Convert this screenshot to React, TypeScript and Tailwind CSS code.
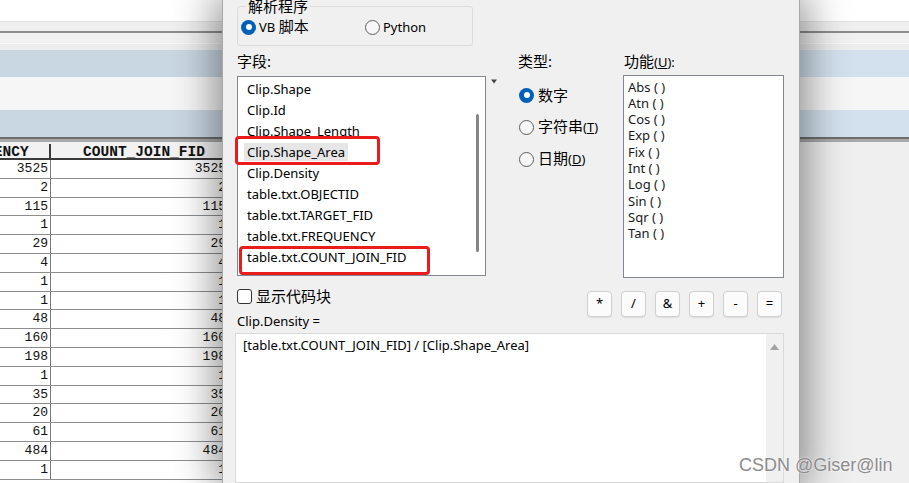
const fields = [
  "Clip.Shape",
  "Clip.Id",
  "Clip.Shape_Length",
  "Clip.Shape_Area",
  "Clip.Density",
  "table.txt.OBJECTID",
  "table.txt.TARGET_FID",
  "table.txt.FREQUENCY",
  "table.txt.COUNT_JOIN_FID",
];

const funcs = ["Abs", "Atn", "Cos", "Exp", "Fix", "Int", "Log", "Sin", "Sqr", "Tan"];

const counts = [3525, 2, 115, 1, 29, 4, 1, 1, 48, 160, 198, 1, 35, 20, 61, 484, 1];

const operators = ["*", "/", "&", "+", "-", "="];

const Z = ({ children }: { children: React.ReactNode }) => (
  <span className="text-[15px]">{children}</span>
);

const Radio = ({ checked }: { checked?: boolean }) =>
  checked ? (
    <span className="flex h-[15px] w-[15px] shrink-0 items-center justify-center rounded-full bg-[#005fb8]">
      <span className="h-[6px] w-[6px] rounded-full bg-white" />
    </span>
  ) : (
    <span className="h-[15px] w-[15px] shrink-0 rounded-full border border-[#5f5f5f] bg-[#f7f7f7]" />
  );

const Strip = ({ blue }: { blue: string }) => (
  <div className="flex shrink-0 flex-col">
    <div className="h-[21px] bg-white" />
    <div className="h-[1px] bg-[#e4e4e4]" />
    <div className="h-[9px] bg-[#efefef]" />
    <div className="h-[2px] bg-[#8c8c8c]" />
    <div className="h-[10px] bg-[#f1f1f1]" />
    <div className="h-[1px] bg-[#fafafa]" />
    <div className="h-[6px] bg-[#ededed]" />
    <div className={`h-[27px] ${blue}`} />
    <div className="h-[33px] bg-[#f6f6f6]" />
    <div className={`h-[27px] ${blue}`} />
    <div className="h-[2px] bg-[#6e6e6e]" />
    <div className="h-[3px] bg-[#a9a9a9]" />
  </div>
);

const LeftPanel = () => (
  <div className="flex w-[222px] shrink-0 flex-col overflow-hidden bg-white">
    <Strip blue="bg-[#c9d7e3]" />
    <div className="ml-[-70px] w-[300px] font-['Liberation_Mono',monospace]">
      <div className="flex h-[18px] border-b-2 border-[#3a3a3a] bg-[#f2f2f2] pt-[2px] text-[14.5px] font-bold leading-[16px] text-[#111]">
        <div className="w-[121px] shrink-0 border-r-2 border-[#3a3a3a] text-center">FREQUENCY</div>
        <div className="w-[178px] shrink-0 pl-[8px] text-center">COUNT_JOIN_FID</div>
      </div>
      {counts.map((n, i) => (
        <div key={i} className="flex h-[18.8px] border-b border-[#8e8e8e] bg-white text-[13px] leading-[18px] text-[#111]">
          <div className="w-[121px] shrink-0 border-r border-[#7a7a7a] pr-[2px] text-right">{n}</div>
          <div className="w-[178px] shrink-0 pr-[3px] text-right">{n}</div>
        </div>
      ))}
    </div>
  </div>
);

const Dialog = () => (
  <div className="relative z-10 flex w-[578px] shrink-0 flex-col border-x border-[#a8a8a8] bg-[#f0f0f0] pl-[14px] text-[13px] text-black shadow-[0_0_40px_6px_rgba(0,0,0,0.45)]">
    {/* parser group */}
    <div className="relative mt-[6px] h-[42px] w-[236px] rounded-[3px] border border-[#dcdcdc]">
      <span className="absolute left-[8px] top-[-9px] bg-[#f0f0f0] px-[2px] text-[15px] leading-[16px]">解析程序</span>
      <div className="flex items-center pl-[3px] pt-[12px] leading-[15px]">
        <div className="flex w-[124px] items-center gap-[3px]">
          <Radio checked />
          <span>
            VB <Z>脚本</Z>
          </span>
        </div>
        <div className="flex items-center gap-[3px]">
          <Radio />
          <span>Python</span>
        </div>
      </div>
    </div>

    {/* fields / type / functions */}
    <div className="mt-[7px] flex h-[225px]">
      <div className="flex w-[249px] shrink-0 flex-col">
        <div className="text-[15px] leading-[16px]">字段:</div>
        <div className="relative mt-[7px] flex h-[200px] border border-[#828790] bg-white">
          <div className="flex-1 pl-[6px] pt-[2px]">
            {fields.map((f) => (
              <div key={f} className="flex h-[21px] items-center">
                <span className={f === "Clip.Shape_Area" ? "bg-[#e6e6e6] px-[3px] leading-[18px]" : "px-[3px] leading-[18px]"}>{f}</span>
              </div>
            ))}
          </div>
          <div className="flex w-[16px] justify-center pt-[37px]">
            <div className="h-[138px] w-[3px] rounded-full bg-[#858585]" />
          </div>
          <div className="absolute left-[-3px] top-[59px] h-[29px] w-[145px] rounded-[4px] border-[3px] border-[#ea1b1b]" />
          <div className="absolute left-[1px] top-[169px] h-[29px] w-[191px] rounded-[4px] border-[3px] border-[#ea1b1b]" />
        </div>
      </div>
      <div className="w-[32px] shrink-0 pl-[5px] pt-[26px]">
        <svg width="6" height="5" viewBox="0 0 6 5">
          <path d="M0 0.5h6L3 4.5z" fill="#444" />
        </svg>
      </div>
      <div className="flex w-[105px] shrink-0 flex-col">
        <div className="text-[15px] leading-[16px]">类型:</div>
        <div className="mt-[19px] flex flex-col gap-[17px] pl-[1px] leading-[15px]">
          <div className="flex h-[15px] items-center gap-[4px]">
            <Radio checked />
            <Z>数字</Z>
          </div>
          <div className="flex h-[15px] items-center gap-[4px]">
            <Radio />
            <span>
              <Z>字符串</Z>(<u>T</u>)
            </span>
          </div>
          <div className="flex h-[15px] items-center gap-[4px]">
            <Radio />
            <span>
              <Z>日期</Z>(<u>D</u>)
            </span>
          </div>
        </div>
      </div>
      <div className="flex w-[161px] shrink-0 flex-col">
        <div className="pl-[1px] leading-[16px]">
          <Z>功能</Z>(<u>U</u>):
        </div>
        <div className="mt-[5px] h-[203px] border border-[#828790] bg-white pl-[4px] pt-[3px] leading-[16.3px] text-[#1a1a1a]">
          {funcs.map((f) => (
            <div key={f}>{f} ( )</div>
          ))}
        </div>
      </div>
    </div>

    {/* code block + operators */}
    <div className="flex w-[547px] justify-between">
      <div className="flex flex-col">
        <div className="mt-[11px] flex h-[15px] items-center gap-[4px]">
          <span className="h-[15px] w-[15px] rounded-[3px] border border-[#333] bg-white" />
          <Z>显示代码块</Z>
        </div>
        <div className="mt-[9px] leading-[16px]">Clip.Density =</div>
      </div>
      <div className="mr-[2px] mt-[13px] flex gap-[9px]">
        {operators.map((o) => (
          <div key={o} className="flex h-[26px] w-[25px] items-center justify-center rounded-[4px] border border-[#d0d0d0] bg-[#fbfbfb] shadow-[0_1px_1px_rgba(0,0,0,0.08)]">
            {o}
          </div>
        ))}
      </div>
    </div>

    {/* expression box */}
    <div className="ml-[-2px] mt-[4px] flex h-[160px] w-[549px] border border-[#d9d9d9] bg-white">
      <div className="flex-1 pl-[7px] pt-[3px] leading-[16px]">[table.txt.COUNT_JOIN_FID] / [Clip.Shape_Area]</div>
      <div className="flex w-[17px] justify-center bg-[#f0f0f0] pt-[10px]">
        <svg width="9" height="6" viewBox="0 0 9 6">
          <path d="M4.5 0L9 6H0z" fill="#a3a3a3" />
        </svg>
      </div>
    </div>
  </div>
);

const RightPanel = () => (
  <div className="flex flex-1 flex-col bg-[#efefef]">
    <Strip blue="bg-[#d3e1ee]" />
  </div>
);

export default function App() {
  return (
    <div className="relative flex h-[483px] w-[909px] overflow-hidden bg-[#efefef] font-['Noto_Sans','Noto_Sans_CJK_SC',sans-serif]">
      <LeftPanel />
      <Dialog />
      <RightPanel />
      <span className="absolute left-[739px] top-[455px] z-20 font-['Liberation_Sans',sans-serif] text-[18px] leading-[20px] text-[#8c8c8c] [text-shadow:0_0_2px_#fff]">
        CSDN @Giser@lin
      </span>
    </div>
  );
}
